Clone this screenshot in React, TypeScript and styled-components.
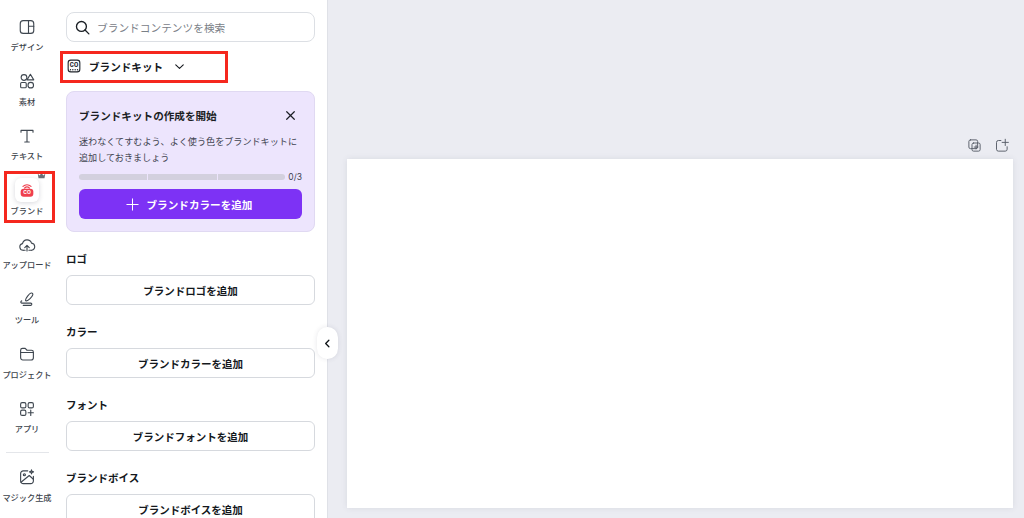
import React from "react";
import styled, { createGlobalStyle } from "styled-components";

const Global = createGlobalStyle`
  html, body { margin: 0; padding: 0; height: 100%; overflow: hidden; }
  body { font-family: "Inter", "Noto Sans CJK JP", sans-serif; color: #0d1216; }
  #root { height: 100%; }
`;

const Page = styled.div`
  position: relative;
  display: flex;
  width: 1024px;
  height: 518px;
  overflow: hidden;
  background: #ebecf2;
`;

const Rail = styled.nav`
  width: 54px;
  flex: none;
  background: #fff;
  display: flex;
  flex-direction: column;
  align-items: center;
  padding-top: 16px;
  overflow: hidden;
`;

const RailItem = styled.div`
  width: 54px;
  height: 54.6px;
  flex: none;
  display: flex;
  flex-direction: column;
  align-items: center;
  color: #3a4149;
`;

const RailIcon = styled.div`
  height: 21px;
  width: 40px;
  display: flex;
  align-items: center;
  justify-content: center;
  color: #3f4750;
`;

const RailLabel = styled.span`
  margin-top: 5px;
  font-size: 8.2px;
  line-height: 11px;
  font-weight: 500;
  white-space: nowrap;
  color: #3c434b;
`;

const BrandTile = styled.div`
  position: relative;
  width: 24px;
  height: 24px;
  flex: none;
  border-radius: 6px;
  background: #fff;
  box-shadow: 0 1px 5px rgba(40, 40, 60, 0.18);
  display: flex;
  align-items: center;
  justify-content: center;
`;

const Crown = styled.svg`
  position: absolute;
  top: -6px;
  right: -7px;
`;

const RailDivider = styled.div`
  width: 43px;
  height: 1px;
  background: #e4e6ea;
  margin: -1px 0 14px;
  flex: none;
`;

const Panel = styled.aside`
  width: 274px;
  flex: none;
  box-sizing: border-box;
  background: #fff;
  border-right: 1px solid #dfe1e7;
  padding: 12px 12px 0;
  display: flex;
  flex-direction: column;
  overflow: hidden;
`;

const Search = styled.div`
  height: 30px;
  flex: none;
  box-sizing: border-box;
  border: 1px solid #dcdfe4;
  border-radius: 8px;
  display: flex;
  align-items: center;
  gap: 6px;
  padding: 0 7px;
  font-size: 10.7px;
  color: #7a8087;
`;

const SearchGlyph = styled.span`
  display: flex;
  color: #1a1f24;
`;

const KitRow = styled.div`
  display: flex;
  align-items: center;
  flex: none;
  height: 24px;
  margin: 12px 0 13px;
  font-size: 10.6px;
  font-weight: 700;
  color: #14181d;
`;

const KitName = styled.span`
  margin: 0 9px 0 8px;
`;

const Card = styled.section`
  flex: none;
  height: 141px;
  box-sizing: border-box;
  background: #ede5fd;
  border: 1px solid #e0d9f2;
  border-radius: 8px;
  padding: 12px 12px 0;
  display: flex;
  flex-direction: column;
`;

const CardHead = styled.div`
  display: flex;
  align-items: center;
  justify-content: space-between;
  flex: none;
  height: 23px;
  font-size: 10.6px;
  font-weight: 700;
  color: #1b1e24;
  padding-right: 5px;
`;

const CardText = styled.p`
  margin: 7px 0 0;
  font-size: 9.1px;
  line-height: 15.5px;
  color: #3f4450;
  white-space: nowrap;
`;

const ProgressRow = styled.div`
  display: flex;
  align-items: center;
  flex: none;
  margin-top: 6px;
  height: 12px;
  gap: 3px;
`;

const Segments = styled.div`
  display: flex;
  flex: 1;
  gap: 1px;
`;

const Segment = styled.div<{ $w: number }>`
  height: 6px;
  flex: ${(p) => p.$w};
  background: #d3d0de;
  &:first-child { border-radius: 3px 0 0 3px; }
  &:last-child { border-radius: 0 3px 3px 0; }
`;

const Count = styled.span`
  font-size: 8.5px;
  color: #3f4450;
`;

const PrimaryButton = styled.div`
  margin-top: 6px;
  height: 30px;
  flex: none;
  border-radius: 6px;
  background: #7d32f5;
  color: #fff;
  display: flex;
  align-items: center;
  justify-content: center;
  gap: 7px;
  padding-right: 4px;
  font-size: 10.6px;
  font-weight: 600;
`;

const Sections = styled.div`
  display: flex;
  flex-direction: column;
  flex: none;
  gap: 20px;
  margin-top: 20px;
`;

const Section = styled.section`
  display: flex;
  flex-direction: column;
  flex: none;
`;

const SectionTitle = styled.h3`
  margin: 0 0 7px;
  font-size: 10.5px;
  line-height: 16px;
  font-weight: 700;
  color: #14181d;
`;

const OutlineButton = styled.div`
  height: 30px;
  box-sizing: border-box;
  border: 1px solid #d6d9de;
  border-radius: 6px;
  display: flex;
  align-items: center;
  justify-content: center;
  font-size: 10.5px;
  font-weight: 600;
  color: #14181d;
  background: #fff;
`;

const Stage = styled.main`
  flex: 1;
  min-width: 0;
  display: flex;
  flex-direction: column;
  padding: 136px 11px 10px 19px;
`;

const PageTools = styled.div`
  height: 23px;
  box-sizing: border-box;
  padding: 1.5px 4.5px 0 0;
  flex: none;
  display: flex;
  justify-content: flex-end;
  align-items: flex-start;
  gap: 12px;
  color: #555c66;
`;

const Sheet = styled.div`
  flex: 1;
  background: #fff;
  box-shadow: 0 0 6px rgba(60, 66, 87, 0.1);
`;

const Collapse = styled.div`
  position: absolute;
  left: 317px;
  top: 327px;
  width: 21px;
  height: 32px;
  border-radius: 11px;
  background: #fff;
  box-shadow: 0 0 5px rgba(50, 50, 70, 0.12);
  display: flex;
  align-items: center;
  justify-content: center;
`;

const Marker = styled.div<{ $l: number; $t: number; $w: number; $h: number }>`
  position: absolute;
  left: ${(p) => p.$l}px;
  top: ${(p) => p.$t}px;
  width: ${(p) => p.$w}px;
  height: ${(p) => p.$h}px;
  box-sizing: border-box;
  border: 3px solid #f5281e;
  pointer-events: none;
`;

type IconProps = { children: React.ReactNode; size?: number; sw?: number };
const Ico = ({ children, size = 18, sw = 1.5 }: IconProps) => (
  <svg width={size} height={size} viewBox="0 0 24 24" fill="none" stroke="currentColor" strokeWidth={sw} strokeLinecap="round" strokeLinejoin="round" style={{ flex: "none" }}>
    {children}
  </svg>
);

const railItems: [string, React.ReactNode][] = [
  ["デザイン", <Ico key="a"><rect x="3" y="3.5" width="18" height="17" rx="4" /><path d="M14 3.5v17M14 11h7" /></Ico>],
  ["素材", <Ico key="b"><path d="M16.5 3l4.5 7.5h-9z" /><path d="M8 3.5a3.8 3.8 0 0 1 0 7.6 3.8 3.8 0 0 1 0-7.6z" /><rect x="3.5" y="14" width="7.5" height="7" rx="1.5" /><circle cx="17" cy="17.5" r="3.7" /></Ico>],
  ["テキスト", <Ico key="c"><path d="M4 7V4.5h16V7M12 4.5V20M9 20h6" /></Ico>],
];

const railItems2: [string, React.ReactNode][] = [
  ["アップロード", <Ico key="d"><path d="M7 19a4.5 4.5 0 0 1-1-8.9 6.2 6.2 0 0 1 12-.6 4.8 4.8 0 0 1 .3 9.5" /><path d="M12 20v-7M9 15.5l3-3 3 3" /><path d="M7 19h2.5M14.5 19H18" /></Ico>],
  ["ツール", <Ico key="e"><path d="M10 13.5c0-2 5-9 7.5-9.5 1.6-.3 2.6 1 2.2 2.5C19 9 13.5 14.5 11.5 14.5c-1 0-1.5-.4-1.5-1z" /><path d="M5 14.5c-1.5.6-2 2.5 0 3h12c1.8 0 2 2.5 0 3H7" /></Ico>],
  ["プロジェクト", <Ico key="f"><path d="M3.5 7a2.5 2.5 0 0 1 2.5-2.5h3.6l2.4 2.5h6a2.5 2.5 0 0 1 2.5 2.5V17a3 3 0 0 1-3 3H6.5a3 3 0 0 1-3-3z" /><path d="M3.5 10h17" /></Ico>],
  ["アプリ", <Ico key="g"><rect x="3.5" y="3.5" width="7" height="7" rx="2" /><rect x="13.5" y="3.5" width="7" height="7" rx="2" /><rect x="3.5" y="13.5" width="7" height="7" rx="2" /><path d="M17 13.5v7M13.5 17h7" /></Ico>],
];

const CoBag = () => (
  <svg width="16" height="16" viewBox="0 0 24 24">
    <path d="M6 6.5a9 9 0 0 1 12 0" fill="none" stroke="#ef3f4d" strokeWidth="1.8" strokeLinecap="round" />
    <path d="M8.5 9a5 5 0 0 1 7 0" fill="none" stroke="#ef3f4d" strokeWidth="1.8" strokeLinecap="round" />
    <rect x="2.5" y="10" width="19" height="12" rx="4.5" fill="#ef3f4d" />
    <text x="12" y="18.5" textAnchor="middle" fontSize="7.5" fontWeight="700" fill="#fff" fontFamily="Inter, sans-serif">CO</text>
  </svg>
);

const KitIcon = () => (
  <svg width="14" height="14" viewBox="0 0 24 24" fill="none" stroke="#20252b" strokeWidth="1.9" style={{ flex: "none", marginLeft: 1 }}>
    <rect x="2" y="2" width="20" height="20" rx="4.5" />
    <text x="12" y="14" textAnchor="middle" fontSize="9.5" fontWeight="800" fill="#20252b" stroke="none" fontFamily="Inter, sans-serif">CO</text>
    <path d="M6 18.5h.01M10 18.5h.01M14 18.5h.01M18 18.5h.01" strokeWidth="2.4" strokeLinecap="round" />
  </svg>
);

const sections = [
  ["ロゴ", "ブランドロゴを追加"],
  ["カラー", "ブランドカラーを追加"],
  ["フォント", "ブランドフォントを追加"],
  ["ブランドボイス", "ブランドボイスを追加"],
];

export default function App() {
  return (
    <Page>
      <Global />
      <Rail>
        {railItems.map(([label, icon]) => (
          <RailItem key={label}>
            <RailIcon>{icon}</RailIcon>
            <RailLabel>{label}</RailLabel>
          </RailItem>
        ))}
        <RailItem>
          <RailIcon>
            <BrandTile>
              <CoBag />
              <Crown width="9" height="8" viewBox="0 0 12 10" fill="#6b7078">
                <path d="M1 2l2.6 2.4L6 .8l2.4 3.6L11 2l-1 6H2z" />
              </Crown>
            </BrandTile>
          </RailIcon>
          <RailLabel>ブランド</RailLabel>
        </RailItem>
        {railItems2.map(([label, icon]) => (
          <RailItem key={label}>
            <RailIcon>{icon}</RailIcon>
            <RailLabel>{label}</RailLabel>
          </RailItem>
        ))}
        <RailDivider />
        <RailItem>
          <RailIcon>
            <Ico>
              <path d="M13 3.8H7a3.5 3.5 0 0 0-3.5 3.5v10A3.5 3.5 0 0 0 7 20.8h10a3.5 3.5 0 0 0 3.5-3.5V11" />
              <circle cx="8.5" cy="9" r="1.4" />
              <path d="M4 19l11-9 5.5 5M18 2.5l.7 2 2 .7-2 .7-.7 2-.7-2-2-.7 2-.7z" />
            </Ico>
          </RailIcon>
          <RailLabel>マジック生成</RailLabel>
        </RailItem>
      </Rail>
      <Panel>
        <Search>
          <SearchGlyph>
            <Ico size={17} sw={1.9}>
              <circle cx="10.5" cy="10.5" r="7" />
              <path d="M15.6 15.6L21 21" />
            </Ico>
          </SearchGlyph>
          ブランドコンテンツを検索
        </Search>
        <KitRow>
          <KitIcon />
          <KitName>ブランドキット</KitName>
          <Ico size={15} sw={1.8}>
            <path d="M6 9.5l6 5.5 6-5.5" />
          </Ico>
        </KitRow>
        <Card>
          <CardHead>
            ブランドキットの作成を開始
            <Ico size={13} sw={2.2}>
              <path d="M5 5l14 14M19 5L5 19" />
            </Ico>
          </CardHead>
          <CardText>
            迷わなくてすむよう、よく使う色をブランドキットに
            <br />
            追加しておきましょう
          </CardText>
          <ProgressRow>
            <Segments>
              <Segment $w={68} />
              <Segment $w={68} />
              <Segment $w={67} />
            </Segments>
            <Count>0/3</Count>
          </ProgressRow>
          <PrimaryButton>
            <Ico size={15} sw={1.6}>
              <path d="M12 3v18M3 12h18" />
            </Ico>
            ブランドカラーを追加
          </PrimaryButton>
        </Card>
        <Sections>
          {sections.map(([title, action]) => (
            <Section key={title}>
              <SectionTitle>{title}</SectionTitle>
              <OutlineButton>{action}</OutlineButton>
            </Section>
          ))}
        </Sections>
      </Panel>
      <Stage>
        <PageTools>
          <Ico size={15}>
            <rect x="3" y="3" width="14" height="14" rx="2.5" />
            <rect x="8" y="8" width="13" height="13" rx="2.5" />
            <path d="M14.5 11.5v6M11.5 14.5h6" />
          </Ico>
          <Ico size={15}>
            <path d="M11 4H7a3 3 0 0 0-3 3v11a3 3 0 0 0 3 3h11a3 3 0 0 0 3-3v-4" />
            <path d="M18 2v10M13 7h10" />
          </Ico>
        </PageTools>
        <Sheet />
      </Stage>
      <Collapse>
        <Ico size={11} sw={2.8}>
          <path d="M15 5l-7 7 7 7" />
        </Ico>
      </Collapse>
      <Marker $l={4} $t={171} $w={51} $h={52} />
      <Marker $l={60} $t={51} $w={168} $h={32} />
    </Page>
  );
}
